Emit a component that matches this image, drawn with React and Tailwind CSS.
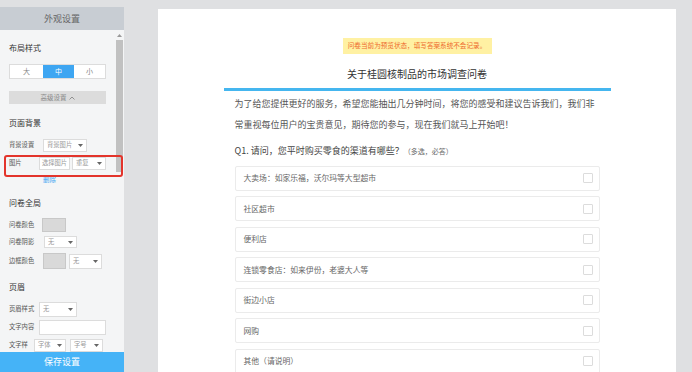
import React from "react";

const Tri = () => (
  <svg width="5" height="3" viewBox="0 0 5 3" className="shrink-0">
    <path d="M0 0 L5 0 L2.5 3z" fill="#666" />
  </svg>
);

function Sel({ className = "", label }) {
  return (
    <div className={"flex items-center justify-between bg-white border border-[#dcdcdc] px-[3px] text-[6.3px] text-[#999] " + className}>
      <span className="leading-none whitespace-nowrap">{label}</span>
      <Tri />
    </div>
  );
}

function Label({ children, w }) {
  return <div className={"text-[6.3px] leading-none text-[#555] shrink-0 whitespace-nowrap " + w}>{children}</div>;
}

function Heading({ children, className = "" }) {
  return <div className={"text-[8px] leading-[12px] h-[12px] text-[#333] " + className}>{children}</div>;
}

const options = [
  "大卖场：如家乐福，沃尔玛等大型超市",
  "社区超市",
  "便利店",
  "连锁零食店：如来伊份，老婆大人等",
  "街边小店",
  "网购",
  "其他（请说明）",
];

export default function App() {
  return (
    <div className="w-[692px] h-[372px] overflow-hidden bg-[#dfe0e2] flex font-['Noto_Sans_CJK_SC','Noto_Sans',sans-serif]">
      {/* Left panel */}
      <div className="relative w-[124px] h-[365px] mt-[7px] flex flex-col shrink-0">
        <div className="h-[23px] bg-[#c8cdd3] flex items-center justify-center text-[9px] text-[#666]">外观设置</div>
        <div className="flex-1 flex bg-[#f4f5f6] overflow-hidden">
          <div className="w-[114px] pl-[9px] flex flex-col">
            <Heading className="mt-[12px]">布局样式</Heading>
            <div className="mt-[10px] h-[16px] w-[97px] flex border border-[#dcdcdc] bg-white text-[7px]">
              <div className="w-[33px] flex items-center justify-center text-[#888]">大</div>
              <div className="w-[31px] flex items-center justify-center bg-[#3ea6f2] text-white">中</div>
              <div className="flex-1 flex items-center justify-center text-[#888]">小</div>
            </div>
            <div className="mt-[12px] h-[14px] w-[97px] bg-[#dcdcdc] flex items-center justify-center gap-[2px] text-[6.5px] text-[#888]">
              <span>高级设置</span>
              <svg width="6" height="4" viewBox="0 0 6 4"><path d="M0.5 3.5 L3 1 L5.5 3.5" stroke="#888" strokeWidth="0.9" fill="none" /></svg>
            </div>
            <Heading className="mt-[13px]">页面背景</Heading>
            <div className="mt-[10px] h-[13px] flex items-center">
              <Label w="w-[34px]">背景设置</Label>
              <Sel className="w-[44px] h-[13px]" label="背景图片" />
            </div>
            <div className="mt-[5px] h-[13px] flex items-center">
              <Label w="w-[30px]">图片</Label>
              <div className="w-[31px] h-[13px] bg-white border border-[#dcdcdc] flex items-center justify-center text-[6.3px] text-[#999] leading-none whitespace-nowrap overflow-hidden">选择图片</div>
              <Sel className="ml-[2px] w-[34px] h-[13px]" label="重复" />
            </div>
            <div className="mt-[4px] h-[10px] pl-[34px] text-[6.5px] leading-[10px] text-[#3ea6f2]">删除</div>
            <Heading className="mt-[13px]">问卷全局</Heading>
            <div className="mt-[9px] h-[14px] flex items-center">
              <Label w="w-[33px]">问卷颜色</Label>
              <div className="w-[24px] h-[14px] bg-[#d9d9d9] border border-[#c8c8c8]" />
            </div>
            <div className="mt-[4px] h-[12px] flex items-center">
              <Label w="w-[35px]">问卷阴影</Label>
              <Sel className="w-[33px] h-[12px]" label="无" />
            </div>
            <div className="mt-[5px] h-[16px] flex items-center">
              <Label w="w-[34px]">边框颜色</Label>
              <div className="w-[23px] h-[16px] bg-[#d9d9d9] border border-[#c8c8c8]" />
              <Sel className="ml-[3px] w-[33px] h-[15px]" label="无" />
            </div>
            <Heading className="mt-[12px]">页眉</Heading>
            <div className="mt-[9px] h-[15px] flex items-center">
              <Label w="w-[30px]">页眉样式</Label>
              <Sel className="w-[38px] h-[15px]" label="无" />
            </div>
            <div className="mt-[3px] h-[15px] flex items-center">
              <Label w="w-[30px]">文字内容</Label>
              <div className="w-[67px] h-[15px] bg-white border border-[#dcdcdc]" />
            </div>
            <div className="mt-[4px] h-[13px] flex items-center">
              <Label w="w-[25px]">文字样</Label>
              <Sel className="w-[32px] h-[13px]" label="字体" />
              <Sel className="ml-[4px] w-[33px] h-[13px]" label="字号" />
            </div>
          </div>
          <div className="w-[10px] flex flex-col items-center">
            <svg width="5" height="3" viewBox="0 0 5 3" className="mt-[4px]"><path d="M0 3 L5 3 L2.5 0z" fill="#999" /></svg>
            <div className="mt-[3px] w-[7px] h-[132px] bg-[#c1c1c1]" />
          </div>
        </div>
        <div className="h-[20px] bg-[#45b3f7] flex items-center justify-center text-[9px] text-white">保存设置</div>
        <div className="absolute left-[4px] top-[148px] w-[119px] h-[22px] border-2 border-[#e3342b] rounded-[3px]" />
      </div>

      {/* Main */}
      <div className="ml-[34px] mt-[9px] w-[518px] h-[400px] bg-white shrink-0">
        <div className="w-[387px] mx-auto flex flex-col">
          <div className="mt-[29px] self-center h-[16px] w-[149px] bg-[#fff1a3] flex items-center justify-center text-[6.6px] text-[#ee6a2c] whitespace-nowrap">
            问卷当前为预览状态，填写答案系统不会记录。
          </div>
          <div className="mt-[13px] h-[14px] text-center text-[10px] leading-[14px] text-[#333]">关于桂圆核制品的市场调查问卷</div>
          <div className="mt-[7px] h-[3px] bg-[#45b6ef]" />
          <div className="px-[11px]">
            <p className="mt-[2px] text-[9px] leading-[21px] text-[#555] whitespace-nowrap">
              为了给您提供更好的服务，希望您能抽出几分钟时间，将您的感受和建议告诉我们，我们非
              <br />
              常重视每位用户的宝贵意见，期待您的参与，现在我们就马上开始吧！
            </p>
            <div className="mt-[8.5px] h-[14px] leading-[14px] text-[9px] text-[#444] whitespace-nowrap">
              Q1. 请问，您平时购买零食的渠道有哪些？<span className="text-[7px] text-[#666]">（多选，必答）</span>
            </div>
            <div className="mt-[8px] flex flex-col gap-[5.5px]">
              {options.map((o) => (
                <div key={o} className="h-[25px] border border-[#ebebeb] rounded-[2px] flex items-center justify-between pl-[8px] pr-[6px]">
                  <span className="text-[7.8px] text-[#666]">{o}</span>
                  <div className="w-[10px] h-[10px] border border-[#dcdcdc] rounded-[1px] bg-white" />
                </div>
              ))}
            </div>
          </div>
        </div>
      </div>
    </div>
  );
}
